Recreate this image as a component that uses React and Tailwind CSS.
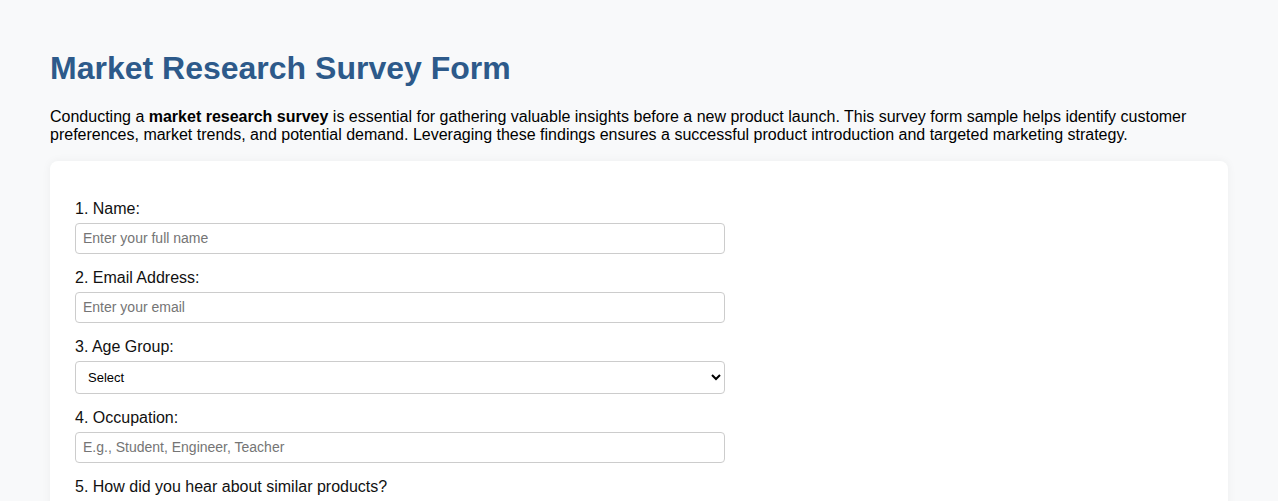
import React from "react";

function Field({ label, children }) {
  return (
    <div className="mb-[15px]">
      <label className="block mb-[5px] text-[16px] leading-[18px] text-[#111]">{label}</label>
      {children}
    </div>
  );
}

const inputCls =
  "block w-[650px] h-[31px] px-[7px] border border-[#cccccc] rounded-[4px] bg-white text-[14px] text-black placeholder:text-[#757575] outline-none";

export default function App() {
  return (
    <div
      className="min-h-screen bg-[#f8f9fa] px-[50px] pt-[50px] pb-[40px]"
      style={{ fontFamily: '"Liberation Sans", Arial, sans-serif' }}
    >
      <h1 className="m-0 mb-[21px] text-[32px] leading-[36.8px] font-bold text-[#2d5a8a]">
        Market Research Survey Form
      </h1>
      <p className="m-0 mb-[16px] text-[16px] leading-[18.4px] text-black">
        Conducting a <strong className="font-bold">market research survey</strong> is essential for gathering
        valuable insights before a new product launch. This survey form sample helps identify customer
        preferences, market trends, and potential demand. Leveraging these findings ensures a successful product
        introduction and targeted marketing strategy.
      </p>
      <div className="bg-white rounded-[8px] shadow-[0_0_10px_rgba(0,0,0,0.05)] px-[25px] pt-[39px] pb-[25px]">
        <Field label="1. Name:">
          <input type="text" placeholder="Enter your full name" className={inputCls} />
        </Field>
        <Field label="2. Email Address:">
          <input type="email" placeholder="Enter your email" className={inputCls} />
        </Field>
        <Field label="3. Age Group:">
          <select className="block w-[650px] h-[33px] px-[8px] border border-[#cccccc] rounded-[4px] bg-white text-[13px] text-black outline-none">
            <option>Select</option>
            <option>Under 18</option>
            <option>18-24</option>
            <option>25-34</option>
            <option>35-44</option>
            <option>45-54</option>
            <option>55+</option>
          </select>
        </Field>
        <Field label="4. Occupation:">
          <input type="text" placeholder="E.g., Student, Engineer, Teacher" className={inputCls} />
        </Field>
        <Field label="5. How did you hear about similar products?">
          <div className="h-[40px]" />
        </Field>
      </div>
    </div>
  );
}
